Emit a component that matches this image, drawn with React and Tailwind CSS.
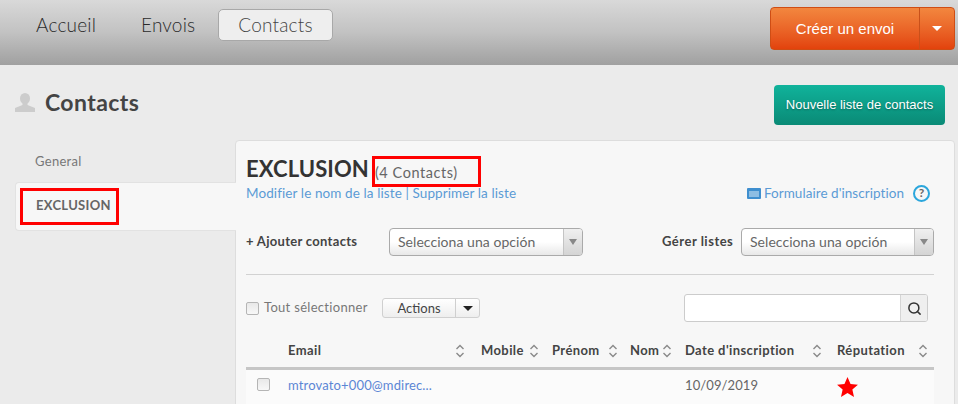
import React from 'react';
import { Search } from 'lucide-react';

const font = { fontFamily: 'Lato, "Open Sans", sans-serif' };

// Up and down chevrons beside each table heading
function SortIcon() {
  return (
    <svg width="10" height="14" viewBox="0 0 10 14" fill="none" stroke="#8a8a8a" strokeWidth="1.4" className="shrink-0 mt-[3px]">
      <path d="M1.5 5 L5 1.5 L8.5 5" />
      <path d="M1.5 9 L5 12.5 L8.5 9" />
    </svg>
  );
}

function Checkbox() {
  return <span className="block w-[13px] h-[13px] rounded-[2px] border border-[#b5b5b5] bg-gradient-to-b from-[#e8e8e8] to-[#f8f8f8]" />;
}

function SelectBox({ className }) {
  return (
    <div className={`flex h-[28px] rounded-[4px] border border-[#aaaaaa] bg-gradient-to-b from-white via-white to-[#e8e8e8] overflow-hidden ${className}`}>
      <span className="flex-1 pl-[8px] text-[14px] tracking-[0.05px] text-[#666] leading-[25px]">Selecciona una opción</span>
      <span className="w-[19px] border-l border-[#c4c4c4] bg-gradient-to-b from-[#f0f0f0] to-[#d4d4d4] flex items-center justify-center">
        <span className="w-0 h-0 border-x-[4px] border-x-transparent border-t-[6px] border-t-[#888]" />
      </span>
    </div>
  );
}

const columns = [
  { label: 'Email', pr: 'pr-[16px]' },
  { label: 'Mobile', pr: 'pr-[13px]' },
  { label: 'Prénom', pr: 'pr-[12px]' },
  { label: 'Nom', pr: 'pr-[13px]' },
  { label: "Date d'inscription", pr: 'pr-[15px]' },
  { label: 'Réputation', pr: 'pr-[6px]' },
];

export default function App() {
  return (
    <div className="h-screen overflow-hidden bg-[#ebebeb] text-[#444]" style={font}>
      {/* Top navigation */}
      <header className="h-[65px] flex items-start justify-between pl-[36px] pr-[3px] bg-gradient-to-b from-[#d9d9d9] via-[#c2c2c2] to-[#a0a0a0]">
        <nav className="flex items-start pt-[9px] text-[19px] tracking-[0.2px] font-light text-[#2a2a2a]">
          <span className="w-[105px] leading-[31px]">Accueil</span>
          <span className="w-[77px] leading-[31px]">Envois</span>
          <span className="w-[115px] h-[32px] rounded-[5px] border border-[#a8a8a8] bg-[#eeeeee] text-center leading-[30px] text-[#444]">Contacts</span>
        </nav>
        <div className="mt-[7px] flex h-[43px] w-[185px] rounded-[4px] border border-[#cf4d14] bg-gradient-to-b from-[#f2863e] to-[#e2420c] text-white">
          <span className="flex-1 text-center text-[15px] leading-[41px] [font-family:'Liberation_Sans',sans-serif]">Créer un envoi</span>
          <span className="w-[35px] border-l border-[#c9501a] flex items-center justify-center">
            <span className="w-0 h-0 border-x-[5px] border-x-transparent border-t-[5px] border-t-white" />
          </span>
        </div>
      </header>

      {/* Page title */}
      <div className="h-[75px] flex items-start justify-between pl-[15px] pr-[13px]">
        <div className="flex items-center gap-[10px] pt-[23px]">
          <svg width="20" height="19" viewBox="0 0 20 19" fill="#cccccc">
            <ellipse cx="10" cy="5.5" rx="5" ry="5.5" />
            <path d="M7.5 10 L12.5 10 L12.5 12 L20 15 L20 19 L0 19 L0 15 L7.5 12 Z" />
          </svg>
          <h1 className="text-[23px] leading-[28px] font-bold tracking-[0.4px] text-[#444]">Contacts</h1>
        </div>
        <div className="mt-[20px] h-[40px] w-[171px] rounded-[4px] bg-gradient-to-b from-[#10b39b] to-[#0a8a76] text-center text-[13px] leading-[39px] text-white [font-family:'Liberation_Sans',sans-serif] [text-shadow:0_1px_2px_rgba(0,0,0,0.35)]">
          Nouvelle liste de contacts
        </div>
      </div>

      <div className="flex items-start pl-[15px] pr-[3px]">
        {/* Side tabs */}
        <aside className="relative z-10 w-[221px] -mr-px shrink-0 pt-[13px]">
          <div className="pl-[20px] h-[29px] text-[13px] tracking-[0.3px] leading-[16px] text-[#777]">General</div>
          <div className="relative h-[49px] rounded-l-[4px] bg-[#f7f7f7] border border-r-0 border-[#e2e2e2] pl-[20px] text-[13px] font-bold tracking-[0.3px] leading-[44px] text-[#666]">
            EXCLUSION
            <span className="absolute left-[4px] top-[5px] w-[99px] h-[37px] border-[3px] border-[#ff0000]" />
          </div>
        </aside>

        {/* Main panel */}
        <main className="flex-1 rounded-t-[4px] border border-[#dddddd] bg-[#f7f7f7] pl-[10px] pr-[20px] pt-[14px] h-[300px]">
          <div className="flex items-end h-[28px]">
            <h2 className="text-[22px] leading-[28px] font-bold tracking-[0.1px] text-[#333]">EXCLUSION</h2>
            <span className="relative ml-[6px] -mb-[2px] text-[14.5px] tracking-[0.55px] leading-[24px] text-[#666]">
              (4 Contacts)
              <span className="absolute left-[-3px] top-[-5px] w-[109px] h-[31px] border-[3px] border-[#ff0000]" />
            </span>
          </div>
          <div className="flex items-center justify-between h-[24px] -mt-[2px] text-[13.5px] tracking-[0.1px] text-[#5b9bd5]">
            <span>Modifier le nom de la liste | Supprimer la liste</span>
            <span className="flex items-center">
              <svg width="14" height="11" viewBox="0 0 14 11" className="mr-[3px]">
                <rect width="14" height="11" rx="1" fill="#3f8fcf" />
                <path d="M2 4 H12 M2 6 H12 M2 8 H12" stroke="#dcecf7" strokeWidth="1" />
              </svg>
              <span className="tracking-[0.05px]">Formulaire d'inscription</span>
              <span className="ml-[9px] mr-[4px] w-[17px] h-[17px] rounded-full border-2 border-[#2ba6dc] flex items-center justify-center text-[12px] font-bold text-[#666]">?</span>
            </span>
          </div>

          <div className="flex items-center justify-between mt-[23px]">
            <div className="flex items-center">
              <span className="w-[143px] text-[13px] font-bold tracking-[0.3px] text-[#444]">+ Ajouter contacts</span>
              <SelectBox className="w-[194px]" />
            </div>
            <div className="flex items-center">
              <span className="w-[79px] text-[13px] font-bold tracking-[0.5px] text-[#444]">Gérer listes</span>
              <SelectBox className="w-[193px]" />
            </div>
          </div>

          <div className="h-px bg-[#d2d2d2] mt-[18px]" />

          {/* Table toolbar */}
          <div className="flex items-center justify-between mt-[19px] pr-[6px] h-[28px]">
            <div className="flex items-center">
              <Checkbox />
              <span className="ml-[5px] w-[118px] text-[13px] tracking-[0.3px] text-[#777]">Tout sélectionner</span>
              <div className="flex h-[20px] w-[98px] rounded-[3px] border border-[#d0d0d0] bg-gradient-to-b from-white to-[#eeeeee] text-[13px] text-[#444]">
                <span className="w-[72px] text-center leading-[18px]">Actions</span>
                <span className="flex-1 border-l border-[#cfcfcf] flex items-center justify-center">
                  <span className="w-0 h-0 border-x-[5px] border-x-transparent border-t-[5px] border-t-[#222]" />
                </span>
              </div>
            </div>
            <div className="flex w-[244px] h-[28px] rounded-[3px] border border-[#cccccc] bg-white overflow-hidden">
              <span className="flex-1" />
              <span className="w-[27px] border-l border-[#d5d5d5] bg-[#efefef] flex items-center justify-center">
                <Search size={15} strokeWidth={2.4} color="#333" />
              </span>
            </div>
          </div>

          {/* Contacts table */}
          <div className="mt-[16px] grid grid-cols-[42px_193px_71px_78px_55px_152px_97px] text-[13px]">
            <div className="h-[32px] border-b-[3px] border-[#c6c6c6]" />
            {columns.map((col) => (
              <div key={col.label} className={`h-[32px] border-b-[3px] border-[#c6c6c6] flex items-start pt-[3px] justify-between font-bold tracking-[0.4px] text-[#444] ${col.pr}`}>
                <span>{col.label}</span>
                <SortIcon />
              </div>
            ))}
            <div className="h-[36px] pl-[11px] pt-[8px] bg-[#fbfbfb]"><Checkbox /></div>
            <div className="h-[36px] pt-[6px] bg-[#fbfbfb] tracking-[0.15px] text-[#5b86d5]">mtrovato+000@mdirec...</div>
            <div className="bg-[#fbfbfb]" />
            <div className="bg-[#fbfbfb]" />
            <div className="bg-[#fbfbfb]" />
            <div className="pt-[6px] bg-[#fbfbfb] tracking-[0.1px] text-[#666]">10/09/2019</div>
            <div className="pt-[7px] bg-[#fbfbfb]">
              <svg width="21" height="20" viewBox="0 0 24 23" fill="#ff0000">
                <path d="M12 0 L15.5 8 L24 8.8 L17.6 14.4 L19.5 23 L12 18.4 L4.5 23 L6.4 14.4 L0 8.8 L8.5 8 Z" />
              </svg>
            </div>
          </div>
        </main>
      </div>
    </div>
  );
}
